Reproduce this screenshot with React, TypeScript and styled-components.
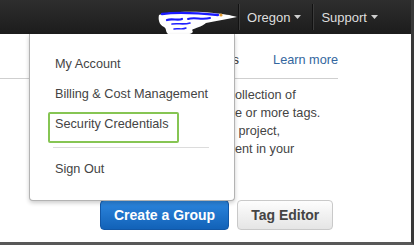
import React from "react";
import styled, { createGlobalStyle } from "styled-components";

const Global = createGlobalStyle`
  html, body { margin: 0; padding: 0; background: #fff; }
  body { font-family: "Liberation Sans", Arial, sans-serif; }
`;

const Frame = styled.div`
  position: relative;
  width: 414px;
  height: 245px;
  box-sizing: border-box;
  border-right: 3px solid #3a3a3a;
  border-bottom: 3px solid #585858;
  overflow: hidden;
  background: #fff;
`;

const TopBar = styled.header`
  height: 34px;
  display: flex;
  align-items: center;
  justify-content: flex-end;
  padding-right: 22px;
  background: linear-gradient(#2e2e2e, #1c1c1c);
`;

const Redaction = styled.svg`
  display: block;
  width: 80px;
  height: 25px;
  align-self: flex-end;
`;

const Divider = styled.span`
  width: 1px;
  height: 26px;
  background: #121212;
  box-shadow: 1px 0 0 #3b3b3b;
  margin-right: 1px;
`;

const NavItem = styled.div`
  display: flex;
  align-items: center;
  gap: 4px;
  padding: 0 11px 0 7px;
  color: #dedede;
  font-size: 13px;
  white-space: nowrap;
`;

const Caret = styled.svg`
  width: 7px;
  height: 4px;
  display: block;
`;

const Page = styled.main`
  font-size: 12.7px;
  color: #444;
`;

const TabRow = styled.div`
  width: 338px;
  height: 45px;
  box-sizing: border-box;
  border-bottom: 1px solid #cfcfcf;
  display: flex;
  justify-content: flex-end;
  align-items: flex-start;
  padding-top: 16px;
  line-height: 20px;
  white-space: nowrap;
`;

const TabTitle = styled.span`
  color: #333;
  font-size: 13px;
`;

const LearnMore = styled.a`
  margin-left: 34px;
  color: #33669e;
  text-decoration: none;
`;

const Paragraph = styled.p`
  margin: 7px 0 0 235px;
  line-height: 18px;
  white-space: pre;
`;

const ButtonRow = styled.div`
  display: flex;
  gap: 8px;
  margin: 42px 0 0 100px;
`;

const Button = styled.button<{ $primary?: boolean }>`
  height: 30px;
  box-sizing: border-box;
  padding: 0 13px;
  border-radius: 4px;
  font-family: "Liberation Sans", Arial, sans-serif;
  font-weight: bold;
  font-size: 14px;
  cursor: pointer;
  color: ${(p) => (p.$primary ? "#fff" : "#444")};
  border: 1px solid ${(p) => (p.$primary ? "#1257a6" : "#c9c9c9")};
  background: ${(p) =>
    p.$primary
      ? "linear-gradient(#2d86de, #1262b8)"
      : "linear-gradient(#fdfdfd, #e5e5e5)"};
`;

const Dropdown = styled.div`
  position: absolute;
  top: 34px;
  left: 29px;
  width: 206px;
  height: 167px;
  box-sizing: border-box;
  border: 1px solid #b3b3b3;
  border-top: none;
  border-radius: 0 0 4px 4px;
  background: #fff;
  box-shadow: 0 2px 4px rgba(0, 0, 0, 0.2);
  padding-top: 15px;
  z-index: 2;
`;

const MenuItem = styled.div`
  position: relative;
  height: 30px;
  line-height: 30px;
  padding-left: 25px;
  font-size: 12.7px;
  color: #444;
  white-space: nowrap;
`;

const Highlight = styled.span`
  position: absolute;
  left: 18px;
  top: 3px;
  width: 131px;
  height: 31px;
  box-sizing: border-box;
  border: 2px solid #86c553;
  border-radius: 2px;
`;

const MenuSeparator = styled.div`
  height: 1px;
  width: 156px;
  margin: 8px 0 6px 23px;
  background: #dcdcdc;
`;

const DownCaret = () => (
  <Caret viewBox="0 0 7 4">
    <path d="M0 0 L7 0 L3.5 4 Z" fill="#cfcfcf" />
  </Caret>
);

export default function App() {
  return (
    <>
      <Global />
      <Frame>
        <TopBar>
          <Redaction viewBox="0 0 80 25">
            <path
              d="M1 6 C10 2 40 2 56 4 C66 5 72 6 79 8 C70 10 58 12 48 14 C44 18 36 19 34 21 C36 23 34 25 30 25 L10 25 C7 22 9 20 6 18 C1 16 0 10 1 6 Z"
              fill="#fff"
            />
            <path d="M4 5 C18 3 40 4 60 6" stroke="#1a1aff" strokeWidth="2.4" fill="none" strokeLinecap="round" />
            <path d="M9 11 C14 9 20 12 24 10" stroke="#1a1aff" strokeWidth="2.2" fill="none" strokeLinecap="round" />
            <path d="M30 10 C36 8 44 11 52 9" stroke="#1a1aff" strokeWidth="2" fill="none" strokeLinecap="round" />
            <path d="M14 15 C20 14 26 16 32 14" stroke="#2020ff" strokeWidth="1.6" fill="none" strokeLinecap="round" />
            <path d="M16 20 C20 19 24 21 28 19" stroke="#2020ff" strokeWidth="1.4" fill="none" strokeLinecap="round" />
            <circle cx="63" cy="6" r="1.6" fill="#e39a2e" />
          </Redaction>
          <Divider />
          <NavItem>
            Oregon <DownCaret />
          </NavItem>
          <Divider />
          <NavItem>
            Support <DownCaret />
          </NavItem>
        </TopBar>

        <Page>
          <TabRow>
            <TabTitle>Resource Groups</TabTitle>
            <LearnMore href="#">Learn more</LearnMore>
          </TabRow>
          <Paragraph>
            {"ollection of\ne or more tags.\n project,\nent in your"}
          </Paragraph>
          <ButtonRow>
            <Button $primary>Create a Group</Button>
            <Button>Tag Editor</Button>
          </ButtonRow>
        </Page>

        <Dropdown>
          <MenuItem>My Account</MenuItem>
          <MenuItem>Billing &amp; Cost Management</MenuItem>
          <MenuItem>
            <Highlight />
            Security Credentials
          </MenuItem>
          <MenuSeparator />
          <MenuItem>Sign Out</MenuItem>
        </Dropdown>
      </Frame>
    </>
  );
}
